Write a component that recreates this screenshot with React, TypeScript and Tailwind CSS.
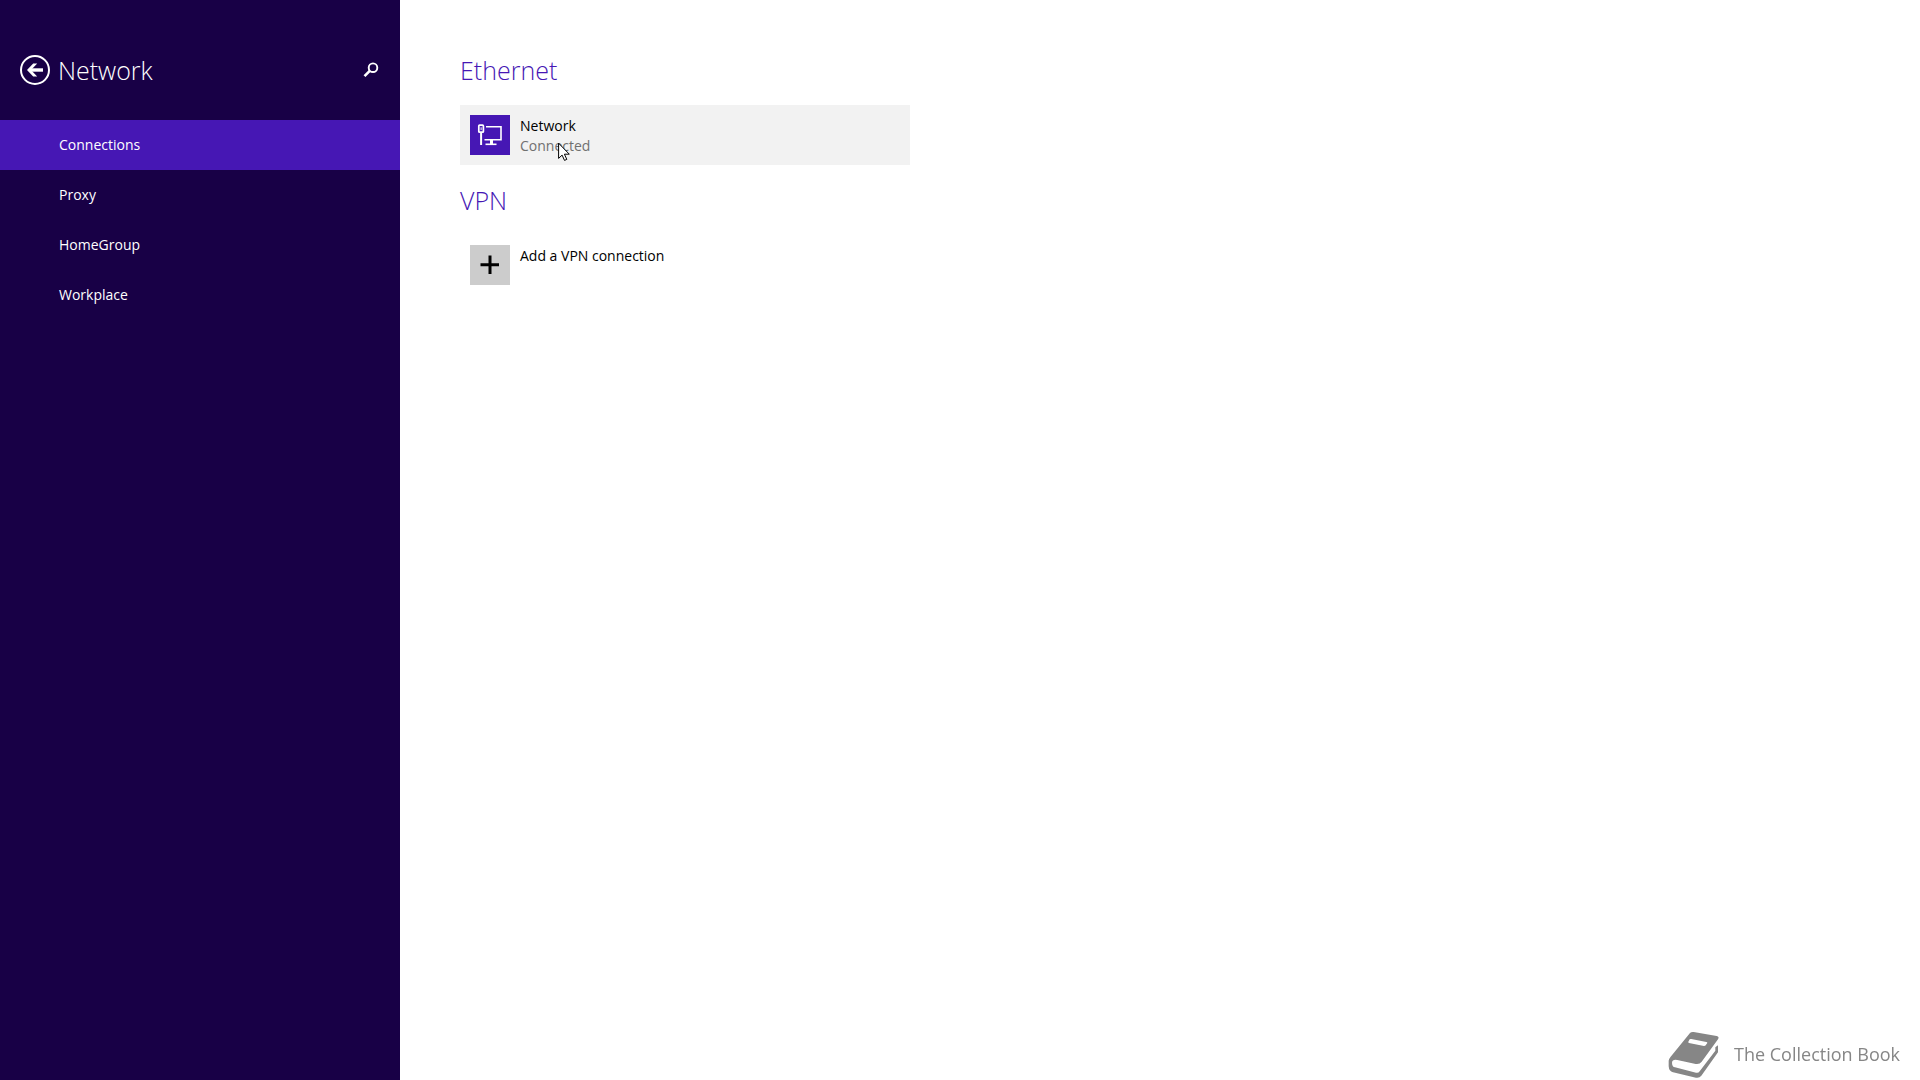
const navItems = ["Connections", "Proxy", "HomeGroup", "Workplace"];

const BackIcon = () => (
  <svg viewBox="0 0 30 30" className="h-[30px] w-[30px]" fill="none" stroke="currentColor">
    <circle cx="15" cy="15" r="14" strokeWidth="2" />
    <path d="M23 15H9" strokeWidth="3.4" />
    <path d="M7 15l6.2-6.5h4L11 15l6.2 6.5h-4z" fill="currentColor" stroke="none" />
  </svg>
);

const SearchIcon = () => (
  <svg viewBox="0 0 16 16" className="h-4 w-4" fill="none" stroke="currentColor">
    <circle cx="10" cy="5.7" r="4.3" strokeWidth="1.9" />
    <path d="M7 8.7L1.5 14.2" strokeWidth="2.6" />
  </svg>
);

const EthernetIcon = () => (
  <svg viewBox="0 0 40 40" className="h-10 w-10" fill="none" stroke="#fff">
    <path d="M16 11.7h15v13H14.5" strokeWidth="1.6" />
    <path d="M21.5 25v4" strokeWidth="3" />
    <path d="M15.5 29.3h11" strokeWidth="1.6" />
    <rect x="8.8" y="10.2" width="4.6" height="7" rx="0.8" strokeWidth="1.7" />
    <path d="M11.1 12.3v2.8" strokeWidth="1" />
    <path d="M11.1 17.5V30" strokeWidth="2" />
  </svg>
);

const PlusIcon = () => (
  <svg viewBox="0 0 40 40" className="h-10 w-10" fill="none" stroke="#000" strokeWidth="3">
    <path d="M20 10.5v18.5M10.5 19.7h18.5" />
  </svg>
);

const BookIcon = () => (
  <svg viewBox="0 0 156 144" className="h-12 w-[52px]" fill="#868686">
    <path
      fillRule="evenodd"
      d="M66 6Q70 2 77 3L146 15Q155 17 150 25L101 92Q95 101 83 99L28 87Q13 84 12 95Q12 107 21 109L84 125Q91 127 95 121L142 59V49L150 43V64L100 134Q94 142 84 140L15 124Q3 121 2 106V89Q3 83 8 77ZM65 25L61 32Q60 35 63 36L108 45Q112 45 113 43L118 36Q118 33 115 33L70 24Q67 23 65 25Z"
    />
  </svg>
);

const Pointer = () => (
  <svg
    viewBox="0 0 12 19"
    className="pointer-events-none absolute top-[37px] left-[98px] h-[19px] w-3"
    fill="#fff"
    stroke="#000"
  >
    <path d="M0.6 1.2v15.2l3.5-3.3 2.4 5.3 2.3-1-2.4-5.2h4.9z" />
  </svg>
);

const Sidebar = () => (
  <aside className="flex w-[400px] shrink-0 flex-col bg-[#180046] text-white">
    <header className="flex h-[120px] items-center gap-2 px-5 pt-5">
      <button type="button" aria-label="Back">
        <BackIcon />
      </button>
      <h1 className="flex-1 text-[25px] leading-8 font-light">Network</h1>
      <button type="button" aria-label="Search" className="p-px">
        <SearchIcon />
      </button>
    </header>
    <nav>
      {navItems.map((item, index) => (
        <a
          key={item}
          href="#"
          aria-current={index === 0 ? "page" : undefined}
          className={`flex h-[50px] items-center pl-[59px] text-sm ${
            index === 0 ? "bg-[#4617b4]" : ""
          }`}
        >
          {item}
        </a>
      ))}
    </nav>
  </aside>
);

export default function App() {
  return (
    <div className="flex min-h-screen bg-white font-['Open_Sans','Noto_Sans',sans-serif] text-black">
      <Sidebar />
      <main className="flex flex-1 flex-col gap-[19px] px-[60px] pt-[54px]">
        <section>
          <h2 className="mb-[19px] text-[25px] leading-8 font-light text-[#4617b4]">Ethernet</h2>
          <button
            type="button"
            className="relative flex h-[60px] w-full max-w-[450px] items-start gap-2.5 bg-[#f2f2f2] p-2.5 text-left text-sm"
          >
            <span className="bg-[#4617b4]">
              <EthernetIcon />
            </span>
            <span className="flex flex-col pt-px">
              <span>Network</span>
              <span className="text-[#707070]">Connected</span>
            </span>
            <Pointer />
          </button>
        </section>
        <section>
          <h2 className="mb-[19px] text-[25px] leading-8 font-light text-[#4617b4]">VPN</h2>
          <button
            type="button"
            className="flex h-[60px] w-full max-w-[450px] items-start gap-2.5 p-2.5 text-left text-sm"
          >
            <span className="bg-[#cccccc]">
              <PlusIcon />
            </span>
            <span className="pt-px">Add a VPN connection</span>
          </button>
        </section>
      </main>
      <div className="fixed right-5 bottom-0 flex items-center gap-3.5 pb-px text-lg leading-6 text-[#868686]">
        <BookIcon />
        <span className="pb-0.5">The Collection Book</span>
      </div>
    </div>
  );
}
